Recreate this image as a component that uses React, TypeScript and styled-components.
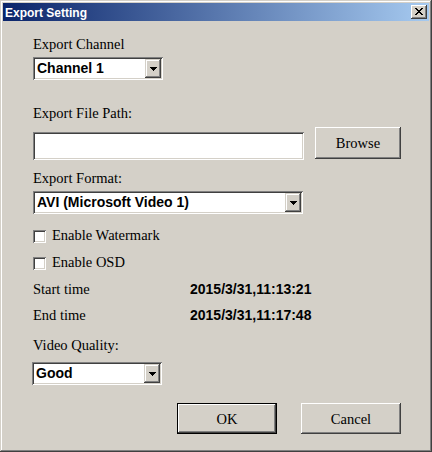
import React from "react";
import styled, { createGlobalStyle, css } from "styled-components";

const Global = createGlobalStyle`
  html, body { margin: 0; padding: 0; background: #d4d0c8; }
  #root { width: 432px; height: 452px; }
`;

const sunken = css`
  box-shadow: inset 1px 1px #808080, inset -1px -1px #ffffff,
    inset 2px 2px #404040, inset -2px -2px #d4d0c8;
`;

const raised = css`
  box-shadow: inset -1px -1px #404040, inset 1px 1px #ffffff,
    inset -2px -2px #808080, inset 2px 2px #d4d0c8;
`;

const serif = css`
  font: 14.5px/16px "Liberation Serif", "Times New Roman", serif;
  color: #000;
`;

const Window = styled.div`
  box-sizing: border-box;
  width: 432px;
  height: 452px;
  padding: 3px;
  background: #d4d0c8;
  box-shadow: inset -1px -1px #404040, inset 1px 1px #d4d0c8,
    inset -2px -2px #808080, inset 2px 2px #ffffff;
  display: flex;
  flex-direction: column;
`;

const TitleBar = styled.div`
  height: 18px;
  flex: none;
  background: linear-gradient(to right, #0a246a, #a6caf0);
  display: flex;
  align-items: center;
  justify-content: space-between;
  padding: 0 2px;
`;

const TitleText = styled.div`
  font: bold 12px/18px "Liberation Sans", Arial, sans-serif;
  color: #ffffff;
  margin-top: 2px;
  height: 18px;
`;

const CloseButton = styled.div`
  box-sizing: border-box;
  width: 16px;
  height: 14px;
  background: #d4d0c8;
  ${raised};
  display: flex;
  align-items: center;
  justify-content: center;
  padding: 0 1px 1px 0;
`;

const Body = styled.div`
  flex: 1;
  display: flex;
  flex-direction: column;
  padding: 0 28px 0 30px;
`;

const Label = styled.div<{ $mt: number }>`
  margin-top: ${(p) => p.$mt}px;
  height: 16px;
  ${serif};
  white-space: nowrap;
`;

const SelectBox = styled.div<{ $mt: number; $w: number; $ml?: number }>`
  box-sizing: border-box;
  margin-top: ${(p) => p.$mt}px;
  margin-left: ${(p) => p.$ml ?? 0}px;
  width: ${(p) => p.$w}px;
  height: 23px;
  background: #ffffff;
  ${sunken};
  padding: 2px;
  display: flex;
  align-items: stretch;
`;

const SelectValue = styled.div`
  flex: 1;
  padding-left: 2px;
  font: bold 14px/19px "Liberation Sans", Arial, sans-serif;
  color: #000;
  white-space: nowrap;
  overflow: hidden;
`;

const ArrowButton = styled.div`
  box-sizing: border-box;
  width: 16px;
  background: #d4d0c8;
  box-shadow: inset -1px -1px #404040, inset 1px 1px #d4d0c8,
    inset -2px -2px #808080, inset 2px 2px #ffffff;
  display: flex;
  align-items: center;
  justify-content: center;
`;

const PathRow = styled.div<{ $mt: number }>`
  margin-top: ${(p) => p.$mt}px;
  display: flex;
  align-items: flex-start;
  justify-content: space-between;
`;

const TextInput = styled.div`
  box-sizing: border-box;
  margin-top: 5px;
  width: 271px;
  height: 28px;
  background: #ffffff;
  ${sunken};
`;

const Button = styled.div<{ $w: number; $h: number; $default?: boolean }>`
  box-sizing: border-box;
  width: ${(p) => p.$w}px;
  height: ${(p) => p.$h}px;
  background: #d4d0c8;
  ${(p) =>
    p.$default
      ? css`
          box-shadow: inset 1px 1px #000, inset -1px -1px #000,
            inset -2px -2px #404040, inset 2px 2px #ffffff,
            inset -3px -3px #808080;
        `
      : raised};
  display: flex;
  align-items: center;
  justify-content: center;
  ${serif};
`;

const CheckRow = styled.div<{ $mt: number }>`
  margin-top: ${(p) => p.$mt}px;
  display: flex;
  align-items: flex-start;
  gap: 6px;
  height: 16px;
  ${serif};
`;

const CheckBox = styled.div`
  box-sizing: border-box;
  width: 13px;
  height: 13px;
  margin-top: 3px;
  background: #ffffff;
  ${sunken};
`;

const TimeRow = styled.div<{ $mt: number }>`
  margin-top: ${(p) => p.$mt}px;
  display: grid;
  grid-template-columns: 157px auto;
  align-items: baseline;
  height: 16px;
`;

const TimeLabel = styled.span`
  ${serif};
`;

const TimeValue = styled.span`
  font: bold 14px/16px "Liberation Sans", Arial, sans-serif;
  color: #000;
`;

const ButtonRow = styled.div<{ $mt: number }>`
  margin-top: ${(p) => p.$mt}px;
  display: flex;
  justify-content: flex-end;
  gap: 24px;
`;

const CloseGlyph = () => (
  <svg width="8" height="7" viewBox="0 0 8 7">
    <path
      fill="#000"
      d="M0 0h2v1H0z M6 0h2v1H6z M1 1h2v1H1z M5 1h2v1H5z M2 2h4v1H2z M3 3h2v1H3z M2 4h4v1H2z M1 5h2v1H1z M5 5h2v1H5z M0 6h2v1H0z M6 6h2v1H6z"
    />
  </svg>
);

const DownArrow = () => (
  <svg width="7" height="4" viewBox="0 0 7 4">
    <path fill="#000" d="M0 0h7v1H0z M1 1h5v1H1z M2 2h3v1H2z M3 3h1v1H3z" />
  </svg>
);

const Select = ({ value, mt, w, ml }: { value: string; mt: number; w: number; ml?: number }) => (
  <SelectBox $mt={mt} $w={w} $ml={ml}>
    <SelectValue>{value}</SelectValue>
    <ArrowButton>
      <DownArrow />
    </ArrowButton>
  </SelectBox>
);

export default function App() {
  return (
    <>
      <Global />
      <Window>
        <TitleBar>
          <TitleText>Export Setting</TitleText>
          <CloseButton>
            <CloseGlyph />
          </CloseButton>
        </TitleBar>
        <Body>
          <Label $mt={15}>Export Channel</Label>
          <Select value="Channel 1" mt={5} w={130} />

          <Label $mt={25}>Export File Path:</Label>
          <PathRow $mt={6}>
            <TextInput />
            <Button $w={86} $h={32}>Browse</Button>
          </PathRow>

          <Label $mt={10}>Export Format:</Label>
          <Select value="AVI (Microsoft Video 1)" mt={5} w={270} />

          <CheckRow $mt={13}>
            <CheckBox />
            <span>Enable Watermark</span>
          </CheckRow>
          <CheckRow $mt={11}>
            <CheckBox />
            <span>Enable OSD</span>
          </CheckRow>

          <TimeRow $mt={11}>
            <TimeLabel>Start time</TimeLabel>
            <TimeValue>2015/3/31,11:13:21</TimeValue>
          </TimeRow>
          <TimeRow $mt={10}>
            <TimeLabel>End time</TimeLabel>
            <TimeValue>2015/3/31,11:17:48</TimeValue>
          </TimeRow>

          <Label $mt={14}>Video Quality:</Label>
          <Select value="Good" mt={9} w={130} ml={-1} />

          <ButtonRow $mt={18}>
            <Button $w={100} $h={31} $default>OK</Button>
            <Button $w={100} $h={31}>Cancel</Button>
          </ButtonRow>
        </Body>
      </Window>
    </>
  );
}
